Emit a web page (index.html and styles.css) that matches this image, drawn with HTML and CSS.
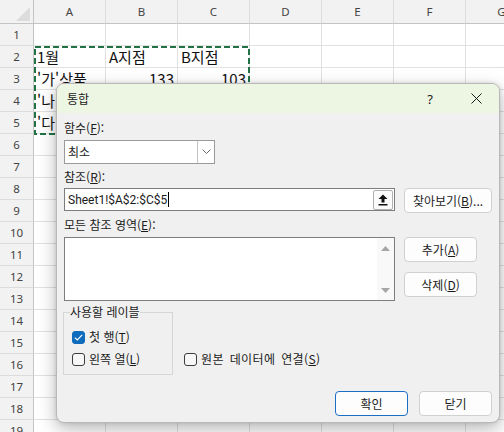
FILE: index.html
```html
<!DOCTYPE html>
<html lang="ko">
<head>
<meta charset="utf-8">
<title>통합</title>
<link rel="stylesheet" href="styles.css">
</head>
<body>
<div class="app">
  <div class="sheet">
    <div class="corner"></div>
    <div class="ch">A</div><div class="ch">B</div><div class="ch">C</div><div class="ch">D</div><div class="ch">E</div><div class="ch">F</div><div class="ch">G</div>

    <div class="rh">1</div><div class="c"></div><div class="c"></div><div class="c"></div><div class="c"></div><div class="c"></div><div class="c"></div><div class="c"></div>
    <div class="rh">2</div><div class="c">1월</div><div class="c">A지점</div><div class="c">B지점</div><div class="c"></div><div class="c"></div><div class="c"></div><div class="c"></div>
    <div class="rh">3</div><div class="c">'가'상품</div><div class="c num">133</div><div class="c num">103</div><div class="c"></div><div class="c"></div><div class="c"></div><div class="c"></div>
    <div class="rh">4</div><div class="c">'나'상품</div><div class="c num"></div><div class="c num"></div><div class="c"></div><div class="c"></div><div class="c"></div><div class="c"></div>
    <div class="rh">5</div><div class="c">'다'상품</div><div class="c num"></div><div class="c num"></div><div class="c"></div><div class="c"></div><div class="c"></div><div class="c"></div>
    <div class="rh">6</div><div class="c"></div><div class="c"></div><div class="c"></div><div class="c"></div><div class="c"></div><div class="c"></div><div class="c"></div>
    <div class="rh">7</div><div class="c"></div><div class="c"></div><div class="c"></div><div class="c"></div><div class="c"></div><div class="c"></div><div class="c"></div>
    <div class="rh">8</div><div class="c"></div><div class="c"></div><div class="c"></div><div class="c"></div><div class="c"></div><div class="c"></div><div class="c"></div>
    <div class="rh">9</div><div class="c"></div><div class="c"></div><div class="c"></div><div class="c"></div><div class="c"></div><div class="c"></div><div class="c"></div>
    <div class="rh">10</div><div class="c"></div><div class="c"></div><div class="c"></div><div class="c"></div><div class="c"></div><div class="c"></div><div class="c"></div>
    <div class="rh">11</div><div class="c"></div><div class="c"></div><div class="c"></div><div class="c"></div><div class="c"></div><div class="c"></div><div class="c"></div>
    <div class="rh">12</div><div class="c"></div><div class="c"></div><div class="c"></div><div class="c"></div><div class="c"></div><div class="c"></div><div class="c"></div>
    <div class="rh">13</div><div class="c"></div><div class="c"></div><div class="c"></div><div class="c"></div><div class="c"></div><div class="c"></div><div class="c"></div>
    <div class="rh">14</div><div class="c"></div><div class="c"></div><div class="c"></div><div class="c"></div><div class="c"></div><div class="c"></div><div class="c"></div>
    <div class="rh">15</div><div class="c"></div><div class="c"></div><div class="c"></div><div class="c"></div><div class="c"></div><div class="c"></div><div class="c"></div>
    <div class="rh">16</div><div class="c"></div><div class="c"></div><div class="c"></div><div class="c"></div><div class="c"></div><div class="c"></div><div class="c"></div>
    <div class="rh">17</div><div class="c"></div><div class="c"></div><div class="c"></div><div class="c"></div><div class="c"></div><div class="c"></div><div class="c"></div>
    <div class="rh">18</div><div class="c"></div><div class="c"></div><div class="c"></div><div class="c"></div><div class="c"></div><div class="c"></div><div class="c"></div>
    <div class="rh">19</div><div class="c"></div><div class="c"></div><div class="c"></div><div class="c"></div><div class="c"></div><div class="c"></div><div class="c"></div>
  </div>

  <svg class="ants" width="216" height="89" viewBox="0 0 216 89">
    <rect x="1" y="1" width="214" height="87" fill="none" stroke="#217346" stroke-width="2" stroke-dasharray="6 3"/>
  </svg>

  <div class="dialog">
    <div class="titlebar">
      <span class="title">통합</span>
      <span class="tb-btn help">?</span>
      <span class="tb-btn">
        <svg width="11" height="11" viewBox="0 0 11 11"><path d="M0.5 0.5 L10.5 10.5 M10.5 0.5 L0.5 10.5" stroke="#1a1a1a" stroke-width="1"/></svg>
      </span>
    </div>
    <div class="body">
      <div class="label l1">함수(<u>F</u>):</div>
      <div class="combo">
        <span class="combo-text">최소</span>
        <span class="combo-btn">
          <svg width="9" height="6" viewBox="0 0 9 6"><path d="M0.5 0.5 L4.5 4.5 L8.5 0.5" fill="none" stroke="#6b6b6b" stroke-width="1"/></svg>
        </span>
      </div>
      <div class="label l2">참조(<u>R</u>):</div>
      <div class="ref-row">
        <div class="refbox">
          <span class="reftext">Sheet1!$A$2:$C$5</span><span class="caret"></span>
          <span class="collapse">
            <svg width="10" height="12" viewBox="0 0 10 12"><path d="M5 0.5 L9.5 5 H6.5 V8.5 H3.5 V5 H0.5 Z" fill="#111"/><rect x="0.5" y="10" width="9" height="1.5" fill="#111"/></svg>
          </span>
        </div>
        <button class="btn browse">찾아보기(<u>B</u>)...</button>
      </div>
      <div class="label l3">모든 참조 영역(<u>E</u>):</div>
      <div class="list-row">
        <div class="listbox">
          <div class="scroll">
            <svg width="9" height="5" viewBox="0 0 9 5"><path d="M4.5 0 L9 5 H0 Z" fill="#a6a6a6"/></svg>
            <svg width="9" height="5" viewBox="0 0 9 5"><path d="M0 0 H9 L4.5 5 Z" fill="#a6a6a6"/></svg>
          </div>
        </div>
        <div class="side-btns">
          <button class="btn side">추가(<u>A</u>)</button>
          <button class="btn side">삭제(<u>D</u>)</button>
        </div>
      </div>
      <div class="labels-row">
        <fieldset class="group">
          <legend>사용할 레이블</legend>
          <label class="check first">
            <span class="box checked"><svg width="9" height="7" viewBox="0 0 9 7"><path d="M0.8 3.6 L3.3 6 L8.2 0.9" fill="none" stroke="#fff" stroke-width="1.1"/></svg></span>
            <span class="check-text">첫 행(<u>T</u>)</span>
          </label>
          <label class="check">
            <span class="box"></span>
            <span class="check-text">왼쪽 열(<u>L</u>)</span>
          </label>
        </fieldset>
        <label class="check link">
          <span class="box"></span>
          <span class="check-text">원본 데이터에 연결(<u>S</u>)</span>
        </label>
      </div>
      <div class="footer">
        <button class="btn foot default">확인</button>
        <button class="btn foot">닫기</button>
      </div>
    </div>
  </div>
</div>
</body>
</html>
```
FILE: styles.css
```css
* { box-sizing: border-box; }
html, body { margin: 0; padding: 0; }
body {
  width: 504px;
  height: 432px;
  overflow: hidden;
  background: #fff;
  font-family: "Noto Sans CJK KR", sans-serif;
}
.app {
  position: relative;
  width: 504px;
  height: 432px;
  overflow: hidden;
}

/* ---------- sheet ---------- */
.sheet {
  display: grid;
  grid-template-columns: 34px repeat(7, 72px);
  grid-template-rows: 24px repeat(19, 22px);
  width: 538px;
}
.corner {
  position: relative;
  background: #f2f2f2;
  border-right: 1px solid #c4c4c4;
  border-bottom: 1px solid #c4c4c4;
}
.corner::after {
  content: "";
  position: absolute;
  right: 3px;
  bottom: 2px;
  border-style: solid;
  border-width: 0 0 14px 14px;
  border-color: transparent transparent #dcdcdc transparent;
}
.ch {
  background: #f2f2f2;
  border-right: 1px solid #dcdcdc;
  border-bottom: 1px solid #c4c4c4;
  font: 11.5px/23px "Noto Sans", sans-serif;
  color: #444;
  text-align: center;
}
.rh {
  background: #f2f2f2;
  border-right: 1px solid #c4c4c4;
  border-bottom: 1px solid #dcdcdc;
  font: 11.5px/21px "Noto Sans", sans-serif;
  color: #444;
  text-align: center;
}
.c {
  border-right: 1px solid #e1e1e1;
  border-bottom: 1px solid #e1e1e1;
  font-size: 15px;
  line-height: 21px;
  padding: 0 3px;
  white-space: nowrap;
  color: #111;
}
.num { text-align: right; }

.ants {
  position: absolute;
  left: 34px;
  top: 46px;
}

/* ---------- dialog ---------- */
.dialog {
  position: absolute;
  left: 56px;
  top: 83px;
  width: 444px;
  height: 340px;
  background: #f0f0f0;
  border: 1px solid #b8b8b8;
  border-radius: 8px;
  box-shadow: 0 6px 18px rgba(0, 0, 0, 0.28), 0 0 4px rgba(0, 0, 0, 0.12);
  overflow: hidden;
  font-size: 12px;
  color: #1b1b1b;
}
.titlebar {
  height: 29px;
  background: #edf5e3;
  display: flex;
  align-items: center;
}
.title {
  flex: 1;
  padding-left: 10px;
  line-height: 16px;
}
.tb-btn {
  width: 46px;
  height: 29px;
  display: flex;
  align-items: center;
  justify-content: center;
}
.help {
  font: 13px/16px "Noto Sans", sans-serif;
  color: #1a1a1a;
}
.body {
  padding: 0 7px;
}
.label { line-height: 16px; }
.l1 { margin-top: 7px; }
.l2 { margin-top: 5px; }
.l3 { margin-top: 4px; }
u { text-underline-offset: 1px; }

.combo {
  margin-top: 4px;
  width: 151px;
  height: 24px;
  border: 1px solid #9a9a9a;
  background: #fff;
  display: flex;
  align-items: center;
}
.combo-text {
  flex: 1;
  padding-left: 3px;
  line-height: 16px;
}
.combo-btn {
  width: 17px;
  height: 100%;
  border-left: 1px solid #c2c2c2;
  display: flex;
  align-items: center;
  justify-content: center;
}

.ref-row {
  margin-top: 3px;
  display: flex;
  align-items: flex-start;
}
.refbox {
  width: 331px;
  height: 23px;
  border: 1px solid #7d7d7d;
  background: #fff;
  display: flex;
  align-items: center;
  padding-left: 3px;
}
.reftext {
  font-family: Roboto, "Noto Sans CJK KR", sans-serif;
  line-height: 16px;
}
.caret {
  width: 1px;
  height: 15px;
  background: #000;
  margin-left: 1px;
}
.collapse {
  margin-left: auto;
  margin-right: 1px;
  width: 20px;
  height: 20px;
  border: 1px solid #b0b0b0;
  border-radius: 2px;
  background: #fbfbfb;
  display: flex;
  align-items: center;
  justify-content: center;
}

.btn {
  height: 25px;
  padding: 0;
  border: 1px solid #d0d0d0;
  border-radius: 4px;
  background: #fdfdfd;
  font: inherit;
  font-size: 12px;
  line-height: 16px;
  color: #1b1b1b;
  text-align: center;
}
.browse {
  width: 88px;
  margin-left: 9px;
}

.list-row {
  margin-top: 4px;
  display: flex;
  align-items: flex-start;
}
.listbox {
  width: 331px;
  height: 64px;
  border: 1px solid #7d7d7d;
  background: #fff;
  display: flex;
  justify-content: flex-end;
}
.scroll {
  width: 17px;
  height: 100%;
  background: #f9f9f9;
  display: flex;
  flex-direction: column;
  justify-content: space-between;
  align-items: center;
  padding: 8px 0 7px;
}
.side-btns {
  margin-left: 9px;
  display: flex;
  flex-direction: column;
  gap: 10px;
}
.side { width: 73px; }

.labels-row {
  margin-top: 3px;
  display: flex;
  align-items: flex-end;
}
.group {
  margin: 0 0 0 -1px;
  width: 110px;
  min-width: 0;
  border: 1px solid #d6d6d6;
  padding: 0 0 4px 8px;
}
.group legend {
  padding: 0;
  margin-left: -2px;
  line-height: 16px;
  font-size: 12px;
}
.check {
  display: flex;
  align-items: center;
  gap: 4px;
  height: 22px;
  white-space: nowrap;
}
.check-text { line-height: 16px; }
.check.first { margin-top: 6px; }
.box {
  width: 13px;
  height: 13px;
  border: 1px solid #3c3c3c;
  border-radius: 3px;
  background: #f7f7f7;
  display: flex;
  align-items: center;
  justify-content: center;
  flex: none;
}
.box.checked {
  background: #0f6cbd;
  border-color: #0f6cbd;
}
.link {
  margin-left: 11px;
  margin-bottom: 5px;
}
.link .check-text {
  word-spacing: 2px;
  letter-spacing: 0.4px;
}

.footer {
  margin-top: 16px;
  display: flex;
  justify-content: flex-end;
  gap: 11px;
}
.foot { width: 73px; }
.default { border-color: #1a6fc4; }
```
